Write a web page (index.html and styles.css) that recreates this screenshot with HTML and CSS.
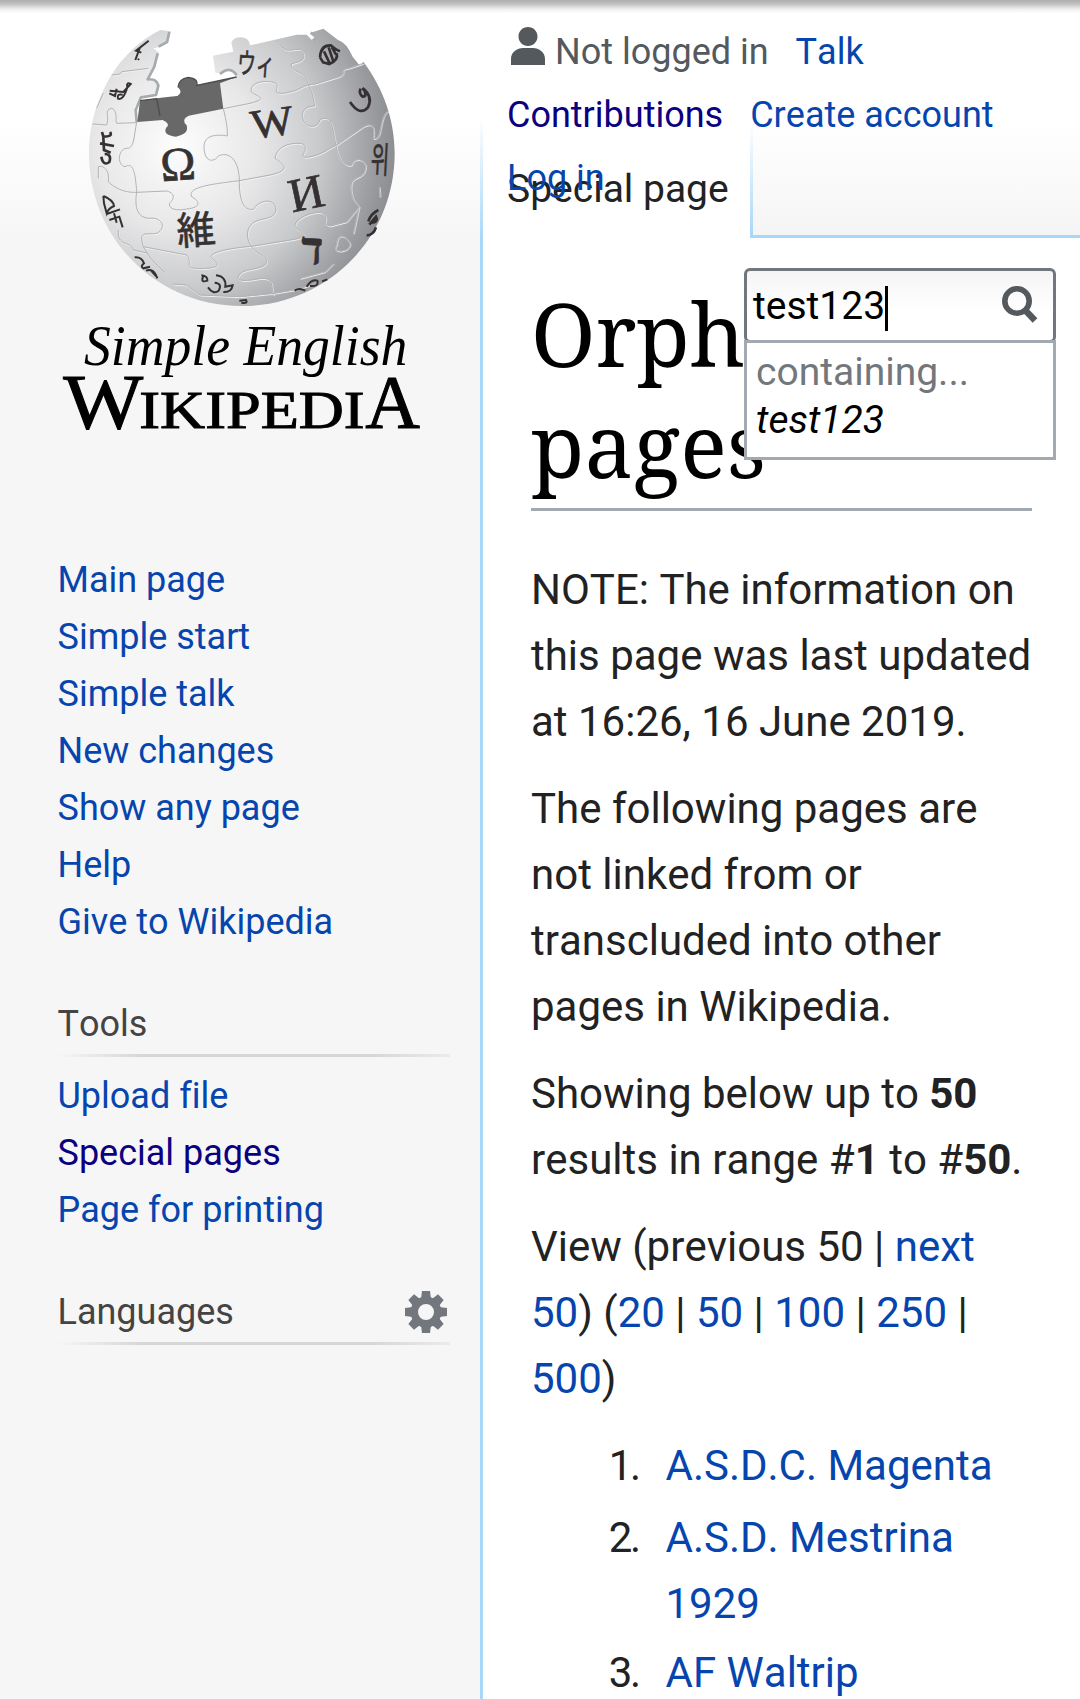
FILE: index.html
```html
<!DOCTYPE html>
<html lang="en">
<head>
<meta charset="utf-8">
<title>Orphaned pages - Simple English Wikipedia</title>
<link rel="stylesheet" href="styles.css">
</head>
<body>
<div class="page">
  <aside class="sidebar">
    <a class="logo" href="#">
      <svg width="400" height="450" viewBox="0 0 1200 1350" role="img">
        <defs>
          <radialGradient id="ball" gradientUnits="userSpaceOnUse" cx="410" cy="440" r="690">
            <stop offset="0" stop-color="#fdfdfd"/>
            <stop offset=".35" stop-color="#e8e8e9"/>
            <stop offset=".62" stop-color="#c9cacc"/>
            <stop offset=".88" stop-color="#98999c"/>
            <stop offset="1" stop-color="#86878a"/>
          </radialGradient>
        </defs>
        <path d="M345 98L362 90L392 94L385 128L358 142L340 145L357 158L346 200L325 238Q352 235 359 255L352 285L305 292L284 320L290 366L550 326L540 250L590 232Q588 203 560 206Q545 222 526 218L519 167L580 155L574 128Q580 112 604 112Q628 114 630 136L770 104L800 104L818 122L830 112L812 98L850 86L893 119Q920 128 938 170L960 198L970 185C1030 265 1064 360 1064 460C1064 718 858 918 606 918C352 918 147 718 147 460C147 360 181 266 239 190Q285 132 345 98Z" fill="url(#ball)"/>
        <path d="M388 96L381 126L356 140M353 160L343 200L323 238Q350 235 355 257L348 285L303 292L287 330L290 366M540 222Q570 195 590 226M812 98L830 112L818 122" fill="none" stroke="#a6acae" stroke-width="8" stroke-linejoin="round"/>
        <path d="M300 302Q370 292 412 288Q430 278 414 262Q416 236 445 232Q476 236 470 256L590 231L540 250L550 326L446 347Q422 358 440 376Q448 402 408 410Q368 406 378 384Q394 372 368 360L292 366Z" fill="#686868"/>
        <path d="M300 302L350 296L360 348M414 262Q416 236 445 232Q476 236 470 256L590 231" fill="none" stroke="#4c4c4c" stroke-width="4"/>
        <g class="seams" fill="none">
          <path d="M550 326Q564 380 562 408C530 402 492 405 492 440C492 485 520 490 535 468C560 455 596 470 598 540C597 600 610 632 640 628C655 600 705 590 708 630C700 672 630 640 622 700C622 760 680 760 680 788C665 815 600 800 594 832C605 860 680 815 694 848L700 885"/>
          <path d="M290 366C282 410 282 440 265 445C235 440 228 495 255 500C275 490 285 500 290 575C285 610 285 655 330 655C360 650 385 680 350 700C315 705 295 690 310 740Q330 780 375 818"/>
          <path d="M205 545C240 580 280 577 290 577L380 573C410 580 400 600 388 610C385 635 430 630 440 627C490 622 475 600 455 590C440 560 520 552 598 542L690 525C760 510 725 490 705 475C710 435 760 425 790 432C810 455 770 470 800 472C850 465 870 440 888 436L970 380C1010 360 1000 400 1000 415C1030 420 1015 350 1045 332"/>
          <path d="M550 326L630 310C690 295 650 290 633 275C630 240 690 240 708 250C720 270 690 280 730 280C790 270 780 255 825 252L890 232C930 220 890 210 925 205L970 190"/>
          <path d="M710 122C740 170 760 140 785 150C805 185 770 185 753 192C755 220 790 210 800 240Q820 280 824 318C810 320 788 320 786 348C795 390 835 385 840 358C880 345 875 380 888 436C895 490 925 500 935 495C940 470 975 475 977 500C975 540 935 525 933 555C930 600 955 610 957 620L940 700"/>
          <path d="M310 740L440 765C460 790 430 800 470 806C560 805 530 790 512 770C520 750 600 742 640 738L750 720C820 710 780 695 764 680C765 650 830 630 850 640C870 660 840 670 870 678L920 665L957 620"/>
          <path d="M158 372L200 375C210 350 190 330 215 325C235 330 225 365 230 370L290 368M170 325L190 280M215 225L240 222L245 215L325 205M205 545C210 510 190 495 175 500L175 535M235 690C230 740 270 720 280 750L325 760M400 852L440 855L480 885L600 890L700 880L760 870L830 850M890 735C870 760 930 760 930 730C915 700 890 700 890 735M880 790L855 815L780 835M1018 560L1020 590"/>
        </g>
        <g class="glyphs">
          <text x="361" y="540" font-size="142" transform="rotate(-4 414 490)">Ω</text>
          <text x="632" y="408" font-size="124" textLength="128" lengthAdjust="spacingAndGlyphs" transform="rotate(-8 700 370)">W</text>
          <text x="744" y="627" font-size="143" textLength="106" lengthAdjust="spacingAndGlyphs" transform="rotate(-12 800 570)">И</text>
          <text x="410" y="732" font-size="116" transform="rotate(-4 470 690)">維</text>
          <text x="592" y="223" font-size="86" textLength="112" lengthAdjust="spacingAndGlyphs" transform="rotate(4 650 190)">ウィ</text>
          <text x="783" y="792" font-size="138" font-weight="bold" transform="rotate(3 817 750)">ד</text>
          <text x="993" y="518" font-size="108" textLength="55" lengthAdjust="spacingAndGlyphs" transform="rotate(3 1020 480)">위</text>
        </g>
        <g class="marks" fill="none">
          <path d="M326 122L288 152L304 158M300 142L286 180M297 176L294 180"/>
          <path d="M208 280L225 288L230 266M209 272L250 276L272 252Q258 245 262 262Q250 302 234 296Q230 280 248 284"/>
          <path class="bold" d="M186 396L190 410Q220 410 210 396M180 430L222 438M190 412L192 450L212 458M184 470Q190 500 208 486Q216 462 194 462"/>
          <path d="M190 588Q220 600 222 618Q205 625 200 640L192 610L190 588M200 642L240 628M208 660L238 650L248 682M222 640L230 668"/>
          <path d="M284 772Q305 770 312 790Q300 800 310 805L330 800M318 812Q340 802 352 835M332 810L348 828"/>
          <path d="M484 826Q504 828 502 842Q480 850 490 828M504 862Q520 885 536 872Q548 850 524 848M528 826Q560 830 556 860L578 856Q574 878 550 876"/>
          <path d="M598 902L618 900Q625 912 604 908M764 872Q778 862 796 872M800 860Q815 835 832 842Q838 860 810 858M846 844L862 838"/>
          <path class="bold" d="M962 266Q955 280 968 290Q985 288 968 264Q1000 290 984 322Q960 350 930 306"/>
          <path class="bold" d="M985 664Q992 642 1015 630M988 674L1008 650Q1016 665 996 668M980 706Q1000 706 1008 682"/>
          <path class="bold" d="M840 172Q842 135 872 136Q888 150 900 154M846 186L868 192Q896 180 890 160M852 154L868 188M866 142L880 184M840 172L850 188M876 142L888 164"/>
        </g>
        <text class="tagline" x="132" y="1096" font-size="168" textLength="970" lengthAdjust="spacingAndGlyphs">Simple English</text>
        <g class="wordmark">
          <text x="70" y="1285" font-size="232" textLength="240" lengthAdjust="spacingAndGlyphs">W</text>
          <text x="298" y="1285" font-size="160" textLength="676" lengthAdjust="spacingAndGlyphs">IKIPEDI</text>
          <text x="976" y="1285" font-size="230" textLength="164" lengthAdjust="spacingAndGlyphs">A</text>
        </g>
      </svg>
    </a>
    <ul class="links nav">
      <li><a href="#">Main page</a></li>
      <li><a href="#">Simple start</a></li>
      <li><a href="#">Simple talk</a></li>
      <li><a href="#">New changes</a></li>
      <li><a href="#">Show any page</a></li>
      <li><a href="#">Help</a></li>
      <li><a href="#">Give to Wikipedia</a></li>
    </ul>
    <h3 class="portal">Tools</h3>
    <ul class="links">
      <li><a href="#">Upload file</a></li>
      <li><a class="visited" href="#">Special pages</a></li>
      <li><a href="#">Page for printing</a></li>
    </ul>
    <h3 class="portal languages">Languages
      <svg class="gear" width="42" height="42" viewBox="-21 -21 42 42">
        <g fill="#72777d">
          <path d="M-4 -21H4L5 -13H-5ZM-4 21H4L5 13H-5ZM-21 -4V4L-13 5V-5ZM21 -4V4L13 5V-5Z"/>
          <path transform="rotate(45)" d="M-4 -21H4L5 -13H-5ZM-4 21H4L5 13H-5ZM-21 -4V4L-13 5V-5ZM21 -4V4L13 5V-5Z"/>
        </g>
        <circle r="11.7" fill="none" stroke="#72777d" stroke-width="7.4"/>
      </svg>
    </h3>
  </aside>
  <div class="rail"></div>
  <main class="main">
    <header class="head">
      <div class="tab">Special page</div>
      <div class="tab-rest"></div>
    </header>
    <article class="content">
      <h1>Orphaned pages</h1>
      <p>NOTE: The information on<br>this page was last updated<br>at 16:26, 16 June 2019.</p>
      <p>The following pages are<br>not linked from or<br>transcluded into other<br>pages in Wikipedia.</p>
      <p>Showing below up to <b>50</b><br>results in range #<b>1</b> to #<b>50</b>.</p>
      <p>View (previous 50 | <a href="#">next<br>50</a>) (<a href="#">20</a> | <a href="#">50</a> | <a href="#">100</a> | <a href="#">250</a> |<br><a href="#">500</a>)</p>
      <ol class="results">
        <li><span class="num">1.</span><a href="#">A.S.D.C. Magenta</a></li>
        <li><span class="num">2.</span><a href="#">A.S.D. Mestrina<br>1929</a></li>
        <li><span class="num">3.</span><a href="#">AF Waltrip</a></li>
      </ol>
    </article>
    <nav class="personal">
      <div class="row"><svg class="user" width="34" height="38" viewBox="0 0 34 38"><path fill="#54595d" d="M17 0c5.400 0 9.500 4.200 9.500 9.500S22.400 19 17 19 7.500 14.800 7.500 9.500 11.600 0 17 0zM0 38v-6c0-7 6-11 12-11h10c6 0 12 4 12 11v6z"/></svg><span class="anon">Not logged in</span><a class="talk" href="#">Talk</a></div>
      <div class="row"><a class="visited contrib" href="#">Contributions</a><a href="#">Create account</a></div>
      <div class="row"><a href="#">Log in</a></div>
    </nav>
    <div class="search">
      <div class="field"><span class="query">test123</span><i class="caret"></i>
        <svg class="lens" width="36" height="38" viewBox="0 0 36 38" fill="none" stroke="#54595d"><ellipse cx="15" cy="15" rx="12.200" ry="12.200" stroke-width="5.600"/><path d="M22.500 23.500L33 34.500" stroke-width="6.500"/></svg>
      </div>
      <div class="suggest"><div class="label">containing...</div><div class="term">test123</div></div>
    </div>
  </main>
  <div class="shade"></div>
</div>
</body>
</html>
```
FILE: styles.css
```css
* { box-sizing: border-box; }
body { margin: 0; background: #fff; font-family: Roboto, sans-serif; font-kerning: none; font-variant-ligatures: none; color: #222; }
a { color: #0645ad; text-decoration: none; }
a.visited { color: #0b0080; }
ul, ol, h1, h3, p { margin: 0; padding: 0; list-style: none; font-weight: 400; }

.page { position: relative; display: flex; width: 1080px; height: 1699px; overflow: hidden; }
.shade { position: absolute; left: 0; top: 0; width: 1080px; height: 13px; background: linear-gradient(#adadad, #c0c0c0 30%, #eee 70%, rgba(255,255,255,0)); }

.sidebar { width: 480px; background: linear-gradient(#fff 120px, #f6f6f6 240px); }
.logo { display: block; height: 450px; margin-left: 40px; }
.logo svg { display: block; }
.seams { stroke: #b0b2b4; stroke-width: 3; filter: drop-shadow(2px 3px 0 #f0f0f0); }
.glyphs { font-family: "Liberation Serif", "Noto Sans CJK JP", "Noto Sans CJK KR", "DejaVu Sans", serif; fill: #353132; stroke: #353132; stroke-width: 2; }
.marks { stroke: #353132; stroke-width: 6; }
.marks .bold { stroke-width: 8; }
.tagline { font-family: "Liberation Serif", serif; font-style: italic; }
.wordmark { font-family: "Liberation Serif", serif; stroke: #000; stroke-width: 3; }

.links { padding-left: 57.5px; font-size: 36px; line-height: 57px; }
.nav { height: 500px; padding-top: 102px; }
.portal { display: flex; align-items: flex-start; justify-content: space-between; width: 393px; height: 62px; margin: 45px 0 11px 57px; padding: 2px 0 0 .5px; font-size: 36px; line-height: 54px; color: #444; background: linear-gradient(to right, rgba(214,214,214,0), #d6d6d6 22%, #d6d6d6 80%, #ebebeb) 0 100% / 100% 3px no-repeat; }
.languages { margin-top: 44px; }
.gear { margin: 6px 3px 0 0; }

.rail { width: 3px; background: linear-gradient(#fff 116px, #a7d7f9 240px); }
.main { position: relative; width: 597px; }
.head { display: flex; height: 238px; padding-top: 122px; }
.tab { width: 267px; padding: 39px 0 0 24px; font-size: 39px; line-height: 56px; white-space: nowrap; }
.tab-rest { flex: 1; border-bottom: 3px solid #a7d7f9; background: linear-gradient(#fff, #a7d7f9) 0 0 / 3px 100% no-repeat, linear-gradient(#fff, #f5f5f5); }

.content { padding: 40px 48px 0 48px; font-size: 42px; line-height: 66px; }
h1 { height: 233px; margin-bottom: 46px; border-bottom: 3px solid #a2a9b1; color: #000; font-family: "Noto Serif", "DejaVu Serif Condensed", serif; font-size: 87px; line-height: 111px; }
.content p { margin-bottom: 21px; white-space: nowrap; }
.results li { display: flex; margin-bottom: 6px; white-space: nowrap; }
.results li + li { margin-bottom: 3px; }
.num { width: 134.5px; padding-right: 27px; text-align: right; letter-spacing: -2.5px; }

.personal { position: absolute; left: 24px; top: 21px; font-size: 36px; line-height: 63px; }
.row { display: flex; height: 63px; white-space: nowrap; }
.user { margin: 6px 10px 0 4px; }
.anon { color: #54595d; }
.talk { margin-left: 27px; }
.contrib { margin-right: 27px; }

.search { position: absolute; left: 261px; top: 268px; width: 312px; color: #000; }
.field { display: flex; align-items: flex-start; height: 75px; padding: 0 15px 0 6px; border: 3px solid #72777d; border-radius: 6px; background: linear-gradient(#f5f5f5, #fff 60%); font-size: 39px; line-height: 70px; }
.caret { width: 3px; height: 45px; margin-top: 15px; background: #000; }
.lens { margin: 15px 0 0 auto; }
.suggest { position: relative; height: 120px; margin-top: -3px; padding: 5px 9px; border: 3px solid #a2a9b1; background: #fff; font-size: 39px; line-height: 48px; }
.label { color: #72777d; }
.term { font-style: italic; }
```
